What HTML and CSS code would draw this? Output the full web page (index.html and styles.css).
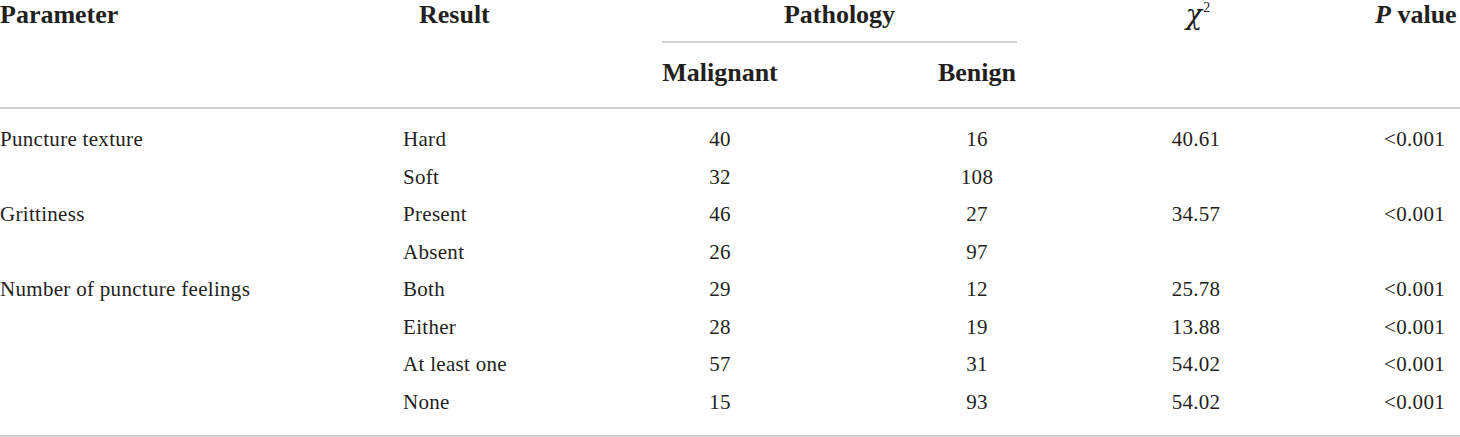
FILE: index.html
```html
<!DOCTYPE html>
<html lang="en">
<head>
<meta charset="utf-8">
<title>Puncture feelings vs pathology</title>
<link rel="stylesheet" href="styles.css">
</head>
<body>
<table class="data">
  <colgroup>
    <col class="c-param">
    <col class="c-result">
    <col class="c-mal">
    <col class="c-ben">
    <col class="c-chi">
    <col class="c-p">
  </colgroup>
  <thead>
    <tr class="h1">
      <th rowspan="2" class="param hb">Parameter</th>
      <th rowspan="2" class="result hb">Result</th>
      <th colspan="2" class="patho">Pathology</th>
      <th rowspan="2" class="chi hb"><span class="greek">χ</span><sup>2</sup></th>
      <th rowspan="2" class="pval hb"><i>P</i> value</th>
    </tr>
    <tr class="h2">
      <th class="mal hb">Malignant</th>
      <th class="ben hb">Benign</th>
    </tr>
  </thead>
  <tbody>
    <tr class="first">
      <td class="param">Puncture texture</td>
      <td class="result">Hard</td>
      <td class="mal">40</td>
      <td class="ben">16</td>
      <td class="chi">40.61</td>
      <td class="pval">&lt;0.001</td>
    </tr>
    <tr>
      <td class="param"></td>
      <td class="result">Soft</td>
      <td class="mal">32</td>
      <td class="ben">108</td>
      <td class="chi"></td>
      <td class="pval"></td>
    </tr>
    <tr>
      <td class="param">Grittiness</td>
      <td class="result">Present</td>
      <td class="mal">46</td>
      <td class="ben">27</td>
      <td class="chi">34.57</td>
      <td class="pval">&lt;0.001</td>
    </tr>
    <tr>
      <td class="param"></td>
      <td class="result">Absent</td>
      <td class="mal">26</td>
      <td class="ben">97</td>
      <td class="chi"></td>
      <td class="pval"></td>
    </tr>
    <tr>
      <td class="param">Number of puncture feelings</td>
      <td class="result">Both</td>
      <td class="mal">29</td>
      <td class="ben">12</td>
      <td class="chi">25.78</td>
      <td class="pval">&lt;0.001</td>
    </tr>
    <tr>
      <td class="param"></td>
      <td class="result">Either</td>
      <td class="mal">28</td>
      <td class="ben">19</td>
      <td class="chi">13.88</td>
      <td class="pval">&lt;0.001</td>
    </tr>
    <tr>
      <td class="param"></td>
      <td class="result">At least one</td>
      <td class="mal">57</td>
      <td class="ben">31</td>
      <td class="chi">54.02</td>
      <td class="pval">&lt;0.001</td>
    </tr>
    <tr class="last">
      <td class="param"></td>
      <td class="result">None</td>
      <td class="mal">15</td>
      <td class="ben">93</td>
      <td class="chi">54.02</td>
      <td class="pval">&lt;0.001</td>
    </tr>
  </tbody>
</table>
</body>
</html>
```

FILE: styles.css
```css
html, body {
  margin: 0;
  padding: 0;
  background: #ffffff;
}

body {
  font-family: "Liberation Serif", "Times New Roman", serif;
  color: #231f20;
}

.data {
  width: 1460px;
  table-layout: fixed;
  border-collapse: separate;
  border-spacing: 0;
}

.c-param { width: 400px; }
.c-result { width: 262px; }
.c-mal { width: 116px; }
.c-ben { width: 239px; }
.c-chi { width: 358px; }
.c-p { width: 85px; }

/* ---------- header ---------- */
.data th {
  font-size: 26px;
  font-weight: bold;
  line-height: 30px;
  padding: 0;
  vertical-align: top;
  white-space: nowrap;
}

.data th.hb {
  border-bottom: 2px solid #d2d2d2;
}

.data th.param { text-align: left; }
.data th.result { text-align: left; padding-left: 19px; }
.data th.patho {
  text-align: center;
  padding-bottom: 11px;
  border-bottom: 2px solid #d2d2d2;
}
.data th.chi { text-align: center; padding-left: 4px; }
.data th.pval { text-align: right; padding-right: 5px; }

.data .h2 th.mal { text-align: center; padding-top: 15px; padding-bottom: 19px; }
.data .h2 th.ben { text-align: center; padding-left: 159px; padding-top: 15px; padding-bottom: 19px; }

.greek {
  font-family: "DejaVu Serif", "Liberation Serif", serif;
  font-style: italic;
  font-weight: normal;
  font-size: 27px;
  line-height: 30px;
}
.data th sup {
  font-size: 14px;
  font-weight: normal;
  line-height: 0;
  vertical-align: 12px;
  margin-left: 1px;
}

/* ---------- body ---------- */
.data td {
  font-size: 21px;
  line-height: 37.5px;
  padding: 0;
  white-space: nowrap;
  letter-spacing: 0.3px;
}

.data tr.first td { padding-top: 12px; }
.data tr.last td {
  padding-bottom: 14px;
  border-bottom: 2px solid #d2d2d2;
}

.data td.param { text-align: left; }
.data td.result { text-align: left; padding-left: 3px; }
.data td.mal { text-align: center; }
.data td.ben { text-align: center; padding-left: 159px; }
.data td.chi { text-align: center; }
.data td.pval { text-align: right; padding-right: 15px; }
```
